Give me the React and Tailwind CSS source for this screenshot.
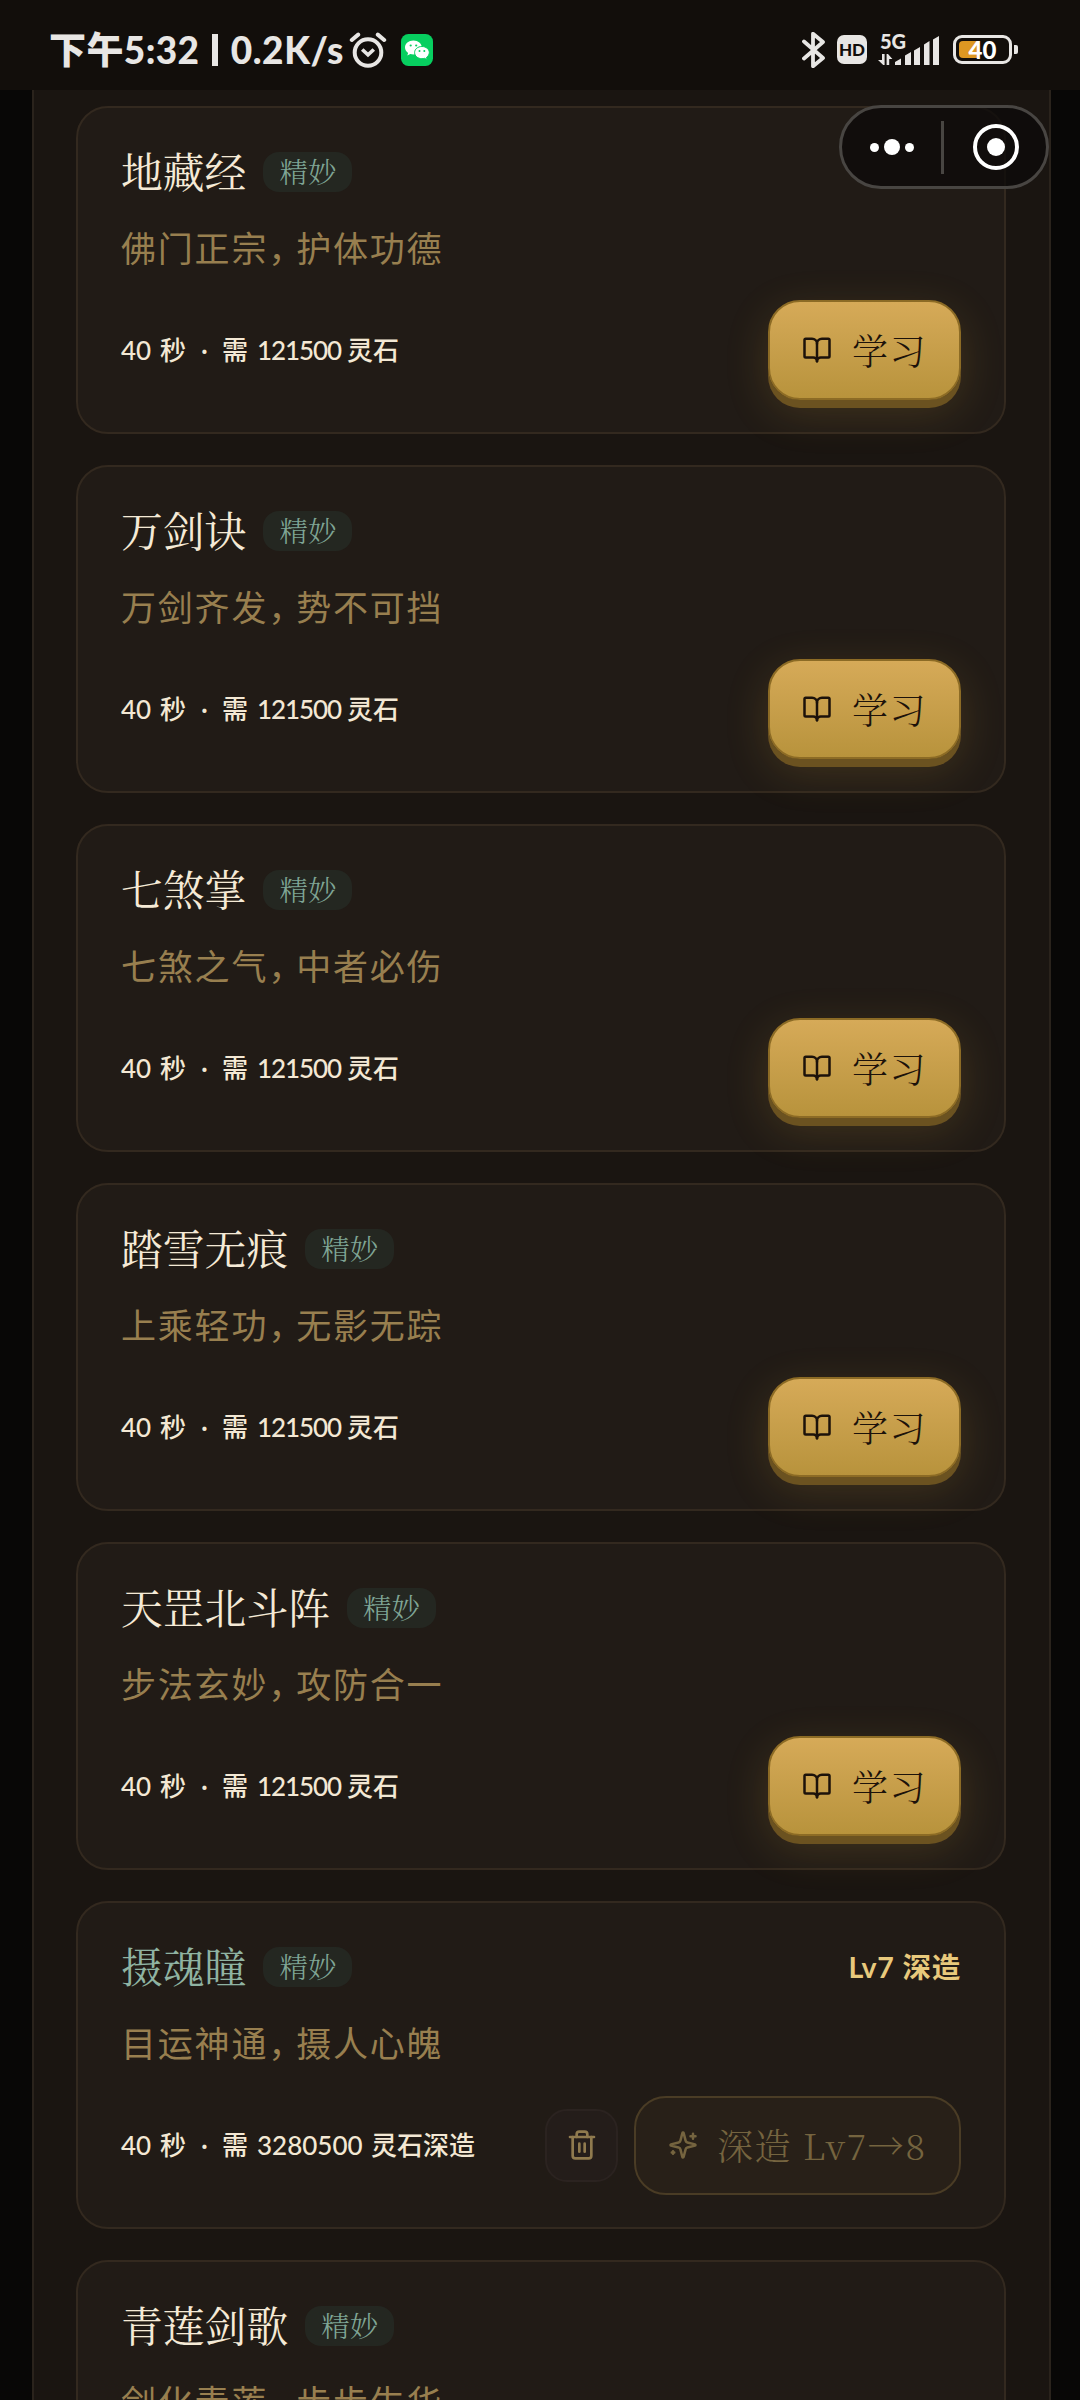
import { BookOpen, Trash2 } from 'lucide-react';

const SKILLS = [
    { name: '地藏经', desc: ['佛门正宗', '护体功德'], cost: '121500' },
    { name: '万剑诀', desc: ['万剑齐发', '势不可挡'], cost: '121500' },
    { name: '七煞掌', desc: ['七煞之气', '中者必伤'], cost: '121500' },
    { name: '踏雪无痕', desc: ['上乘轻功', '无影无踪'], cost: '121500' },
    { name: '天罡北斗阵', desc: ['步法玄妙', '攻防合一'], cost: '121500' },
    { name: '摄魂瞳', desc: ['目运神通', '摄人心魄'], cost: '3280500', level: 7 },
    { name: '青莲剑歌', desc: ['剑化青莲', '步步生华'], cost: '121500' },
];

function StatusBar() {
    return (
        <div className="relative z-10 flex h-[90px] shrink-0 items-center bg-[#120e0b] pt-[9px] pl-[49px] font-['Lato','Noto_Sans_CJK_SC',sans-serif] text-[#e8e6e4]">
            <div className="flex w-[295px] shrink-0 items-center justify-between text-[37px] leading-[40px] font-black whitespace-pre">
                <span className="tracking-[0.4px]">下午5:32</span>
                <span className="h-[32px] w-[6px] bg-[#e8e6e4]"/>
                <span className="tracking-[0.6px]">0.2K/s</span>
            </div>

            {/* Alarm */}
            <svg className="ml-[5px] h-[38px] w-[38px]" viewBox="0 0 38 38" fill="none" stroke="currentColor" strokeWidth="4">
                <circle cx="19" cy="21.5" r="13.3"/>
                <path strokeLinecap="round" d="M2.8 9l6.4-5.400M35.200 9l-6.400-5.400"/>
                <path strokeWidth="3.6" d="M13.200 18.500l5.800 5.400 5.800-5.400"/>
            </svg>

            {/* WeChat */}
            <svg className="ml-[14px] h-[32px] w-[32px]" viewBox="0 0 32 32">
                <rect width="32" height="32" rx="7.5" fill="#07cf60"/>
                <path fill="#fff" d="M12.4 6.6C7.600 6.600 4 9.700 4 13.500c0 2.200 1.200 4.100 3.100 5.400l-.8 2.700 3-1.600c1 .3 2 .4 3.100.4 4.700 0 8.400-3.100 8.400-6.900s-3.700-6.900-8.400-6.900z"/>
                <path fill="#fff" stroke="#07cf60" strokeWidth="1" d="M20.900 12.500c-4.200 0-7.300 2.700-7.300 6.100s3.200 6.100 7.300 6.100c.9 0 1.800-.1 2.600-.4l2.700 1.400-.7-2.300c1.700-1.200 2.800-2.900 2.800-4.800 0-3.400-3.200-6.100-7.400-6.100z"/>
                <g fill="#07cf60">
                    <circle cx="9.700" cy="11.500" r="1.100"/>
                    <circle cx="15.200" cy="11.500" r="1.100"/>
                    <circle cx="18.500" cy="17" r="1"/>
                    <circle cx="23.300" cy="17" r="1"/>
                </g>
            </svg>

            <div className="ml-auto flex items-center pr-[68px]">
                {/* Bluetooth */}
                <svg className="h-[36px] w-[24px]" viewBox="0 0 24 36" fill="none" stroke="currentColor" strokeWidth="3.8" strokeLinecap="round" strokeLinejoin="round">
                    <path d="M2 9.500l19 16.500-10 8.200V1.800L21 10 2 26.500"/>
                </svg>
                <span className="ml-[11px] flex h-[29px] w-[30px] items-center justify-center rounded-[7px] bg-[#e8e6e4] text-[17px] leading-none font-black text-[#120e0b]">HD</span>

                {/* Signal */}
                <div className="relative ml-[11px] h-[32px] w-[62px]">
                    <svg className="h-[32px] w-[62px]" viewBox="0 0 62 32" fill="currentColor">
                        <path d="M4 20h2.600v11h-1.400L0 26h4zM8.600 31V20h1.400l4.400 5h-3.200v6z"/>
                        <path d="M17 31v-3l6-3.500V31zM27 31V21.500l6-3.500v13zM36 31V16.500l6-3.500v18zM46 31V10.500L51.500 7v24zM55 31V5.500L61 2v29z"/>
                    </svg>
                    <span className="absolute -top-[4px] left-[2px] text-[20px] leading-[22px] font-black">5G</span>
                </div>

                {/* Battery */}
                <div className="relative ml-[13px] flex h-[29px] w-[59px] items-center justify-center rounded-[9px] border-[3px] border-[#e8e6e4]">
                    <div className="absolute top-[3px] left-[3px] h-[17px] w-[20px] rounded-l-[4px] bg-[#dd9722]"/>
                    <span className="relative text-[24px] leading-none font-black text-white">40</span>
                    <div className="absolute top-[7px] -right-[9px] h-[9px] w-[4px] rounded-r-[2px] bg-[#e8e6e4]"/>
                </div>
            </div>
        </div>
    );
}

function Capsule() {
    return (
        <div className="absolute top-[105px] left-[839px] z-20 flex h-[84px] w-[210px] items-center rounded-full border-[3px] border-[#484542] bg-[#0c0a09]/75">
            <div className="flex w-[99px] items-center justify-center gap-[5px]">
                <span className="h-[9px] w-[9px] rounded-full bg-white"/>
                <span className="h-[16px] w-[16px] rounded-full bg-white"/>
                <span className="h-[9px] w-[9px] rounded-full bg-white"/>
            </div>
            <span className="h-[53px] w-[3px] bg-[#484542]"/>
            <div className="flex flex-1 justify-center pl-[2px]">
                <div className="flex h-[46px] w-[46px] items-center justify-center rounded-full border-4 border-white">
                    <span className="h-[18px] w-[18px] rounded-full bg-white"/>
                </div>
            </div>
        </div>
    );
}

function LearnButton() {
    return (
        <button className="flex h-[100px] w-[193px] items-center rounded-[32px] border-2 border-[#8c6b25] bg-linear-to-b from-[#d6aa58] to-[#b8933c] pl-[32px] font-['Noto_Serif_CJK_SC','Noto_Serif_SC','Noto_Sans_CJK_SC',serif] text-[36px] font-light text-[#1c120a] shadow-[0_8px_0_#6b5220,0_12px_44px_rgba(200,155,60,0.2)]">
            <BookOpen size={30} strokeWidth={2}/>
            <span className="ml-[20px] tracking-[1.5px]">学习</span>
        </button>
    );
}

function UpgradeActions({ level }) {
    return (
        <div className="flex items-center gap-4">
            <button className="flex h-[73px] w-[73px] items-center justify-center rounded-[22px] border-2 border-[#2b2320] bg-[#241d1a] text-[#8f7a4e]">
                <Trash2 size={32} strokeWidth={2}/>
            </button>
            <button className="flex h-[99px] w-[327px] items-center rounded-[32px] border-2 border-[#4a3c25] bg-[#282018] pl-[32px] font-['Noto_Serif_CJK_SC','Noto_Serif_SC','Noto_Sans_CJK_SC',serif] text-[36px] font-light text-[#75643f]">
                <svg width="30" height="30" viewBox="0 0 24 24" fill="none" stroke="currentColor" strokeWidth="2" strokeLinecap="round" strokeLinejoin="round">
                    <path d="M9.937 15.500A2 2 0 0 0 8.500 14.063l-6.135-1.582a.5.5 0 0 1 0-.962L8.500 9.936A2 2 0 0 0 9.937 8.500l1.582-6.135a.5.5 0 0 1 .963 0L14.063 8.500A2 2 0 0 0 15.500 9.937l6.135 1.581a.5.5 0 0 1 0 .964L15.500 14.063a2 2 0 0 0-1.437 1.437l-1.582 6.135a.5.5 0 0 1-.963 0z"/>
                    <path d="M20 3v4M22 5h-4M4 17v2M5 18H3"/>
                </svg>
                <span className="ml-[19px] tracking-[1.6px] whitespace-nowrap">深造 Lv{level}→{level + 1}</span>
            </button>
        </div>
    );
}

function SkillCard({ skill }) {
    const learned = Boolean(skill.level);

    return (
        <div className="h-[328px] shrink-0 rounded-[32px] border-2 border-[#33291f] bg-[#211b16] px-[43px] pt-[44px]">
            <div className="flex h-[40px] items-center font-['Noto_Serif_CJK_SC','Noto_Serif_SC','Noto_Sans_CJK_SC',serif] font-light">
                <h3 className={`pb-[3px] text-[41.8px] font-normal whitespace-nowrap ${learned ? 'text-[#8fb3a2]' : 'text-[#f5ead6]'}`}>
                    {skill.name}
                </h3>
                <span className="ml-[17px] flex h-[40px] w-[89px] items-center justify-center rounded-[16px] bg-[#242721] pb-px text-[28.5px] text-[#7fa595]">
                    精妙
                </span>
                {learned && (
                    <span className="ml-auto font-['Lato','Noto_Sans_CJK_SC',sans-serif] text-[28.5px] font-bold tracking-[0.8px] text-[#e8c97c]">
                        Lv{skill.level} 深造
                    </span>
                )}
            </div>

            <p className="mt-[29px] flex h-[52px] items-center font-['Noto_Sans_CJK_SC',sans-serif] text-[35px] tracking-[1.800px] whitespace-nowrap text-[#987f4f]">
                <span>{skill.desc[0]}</span>
                <span className="tracking-[-7px]">，</span>
                <span>{skill.desc[1]}</span>
            </p>

            <div className="mt-[27px] flex h-[100px] items-center justify-between">
                <p className="flex font-['Lato','Noto_Sans_CJK_SC',sans-serif] text-[26px] font-medium whitespace-nowrap text-[#f3e8d4]">
                    <span className="w-[39px]">40</span>
                    <span className="w-[38px]">秒</span>
                    <span className="w-[24px] pl-[3px]">·</span>
                    <span className="w-[35px]">需</span>
                    <span className={learned ? 'w-[114px]' : 'w-[90px] tracking-[-1.100px]'}>{skill.cost}</span>
                    <span>灵石{learned && '深造'}</span>
                </p>
                {learned ? <UpgradeActions level={skill.level}/> : <LearnButton/>}
            </div>
        </div>
    );
}

export default function App() {
    return (
        <div className="relative flex h-[2400px] w-[1080px] flex-col overflow-hidden bg-[#080706]">
            <StatusBar/>
            <Capsule/>
            <main className="mr-[29px] ml-[32px] flex min-h-0 flex-1 flex-col gap-[31px] border-x-2 border-[#2a231c] bg-[#1a1511] pt-[16px] pr-[43px] pl-[42px]">
                {SKILLS.map(skill => (
                    <SkillCard key={skill.name} skill={skill}/>
                ))}
            </main>
        </div>
    );
}
